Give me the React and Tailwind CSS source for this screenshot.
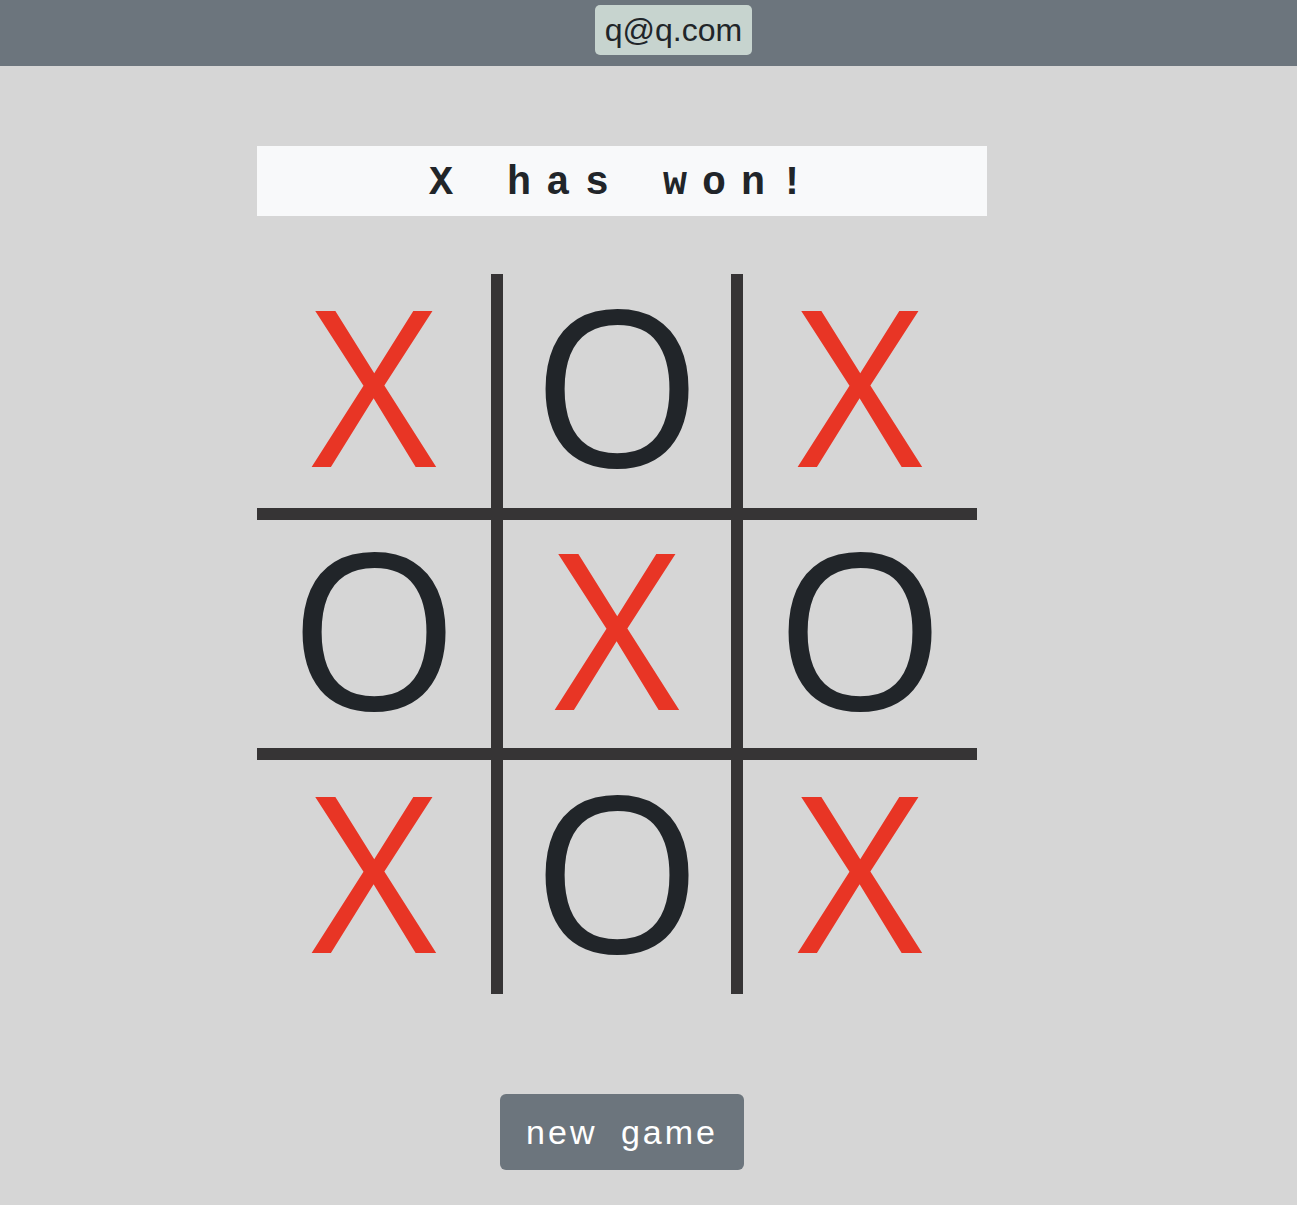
import React from "react";

const board = ["X", "O", "X", "O", "X", "O", "X", "O", "X"];

function cellBorders(i) {
  const r = Math.floor(i / 3);
  const c = i % 3;
  const cls = [];
  if (c === 0) cls.push("border-r-[6px]");
  if (c === 1) cls.push("border-l-[6px] border-r-[6px]");
  if (c === 2) cls.push("border-l-[6px]");
  if (r === 0) cls.push("border-b-[6px]");
  if (r === 1) cls.push("border-t-[6px] border-b-[6px]");
  if (r === 2) cls.push("border-t-[6px]");
  return cls.join(" ");
}

export default function App() {
  return (
    <div className="min-h-[1205px] bg-[#d6d6d6]">
      <header className="flex h-[66px] items-start justify-center bg-[#6c757d] pt-[5px]">
        <div
          className="ml-[50px] flex h-[50px] items-center rounded-[5px] bg-[#c7d4cf] px-[10px] text-[32px] text-[#212529]"
          style={{ fontFamily: '"Liberation Sans", Arial, sans-serif' }}
        >
          q@q.com
        </div>
      </header>

      <main className="ml-[257px] w-[730px] pt-[80px]">
        <div
          className="flex h-[70px] items-center justify-center bg-[#f8f9fa] pt-[6px] pl-[4px] text-[40px] font-bold tracking-[15px] text-[#212529]"
          style={{ fontFamily: '"Liberation Mono", "Courier New", monospace' }}
        >
          X has won!
        </div>

        <div className="mt-[58px] grid w-[720px] grid-cols-3">
          {board.map((v, i) => (
            <div
              key={i}
              className={`flex h-[240px] w-[240px] items-center justify-center border-[#363435] ${cellBorders(i)}`}
            >
              <span
                className={`pb-[16px] text-[218px] leading-[180px] ${
                  v === "X" ? "text-[#e83525]" : "text-[#212529]"
                }`}
                style={{ fontFamily: '"Open Sans", sans-serif' }}
              >
                {v}
              </span>
            </div>
          ))}
        </div>

        <div className="mt-[100px] flex justify-center">
          <button
            className="flex h-[76px] w-[244px] items-center justify-center rounded-[6px] bg-[#6c757d] text-[34px] tracking-[3px] text-white [word-spacing:11px]"
            style={{ fontFamily: '"Liberation Sans", Arial, sans-serif' }}
          >
            new game
          </button>
        </div>
      </main>
    </div>
  );
}
